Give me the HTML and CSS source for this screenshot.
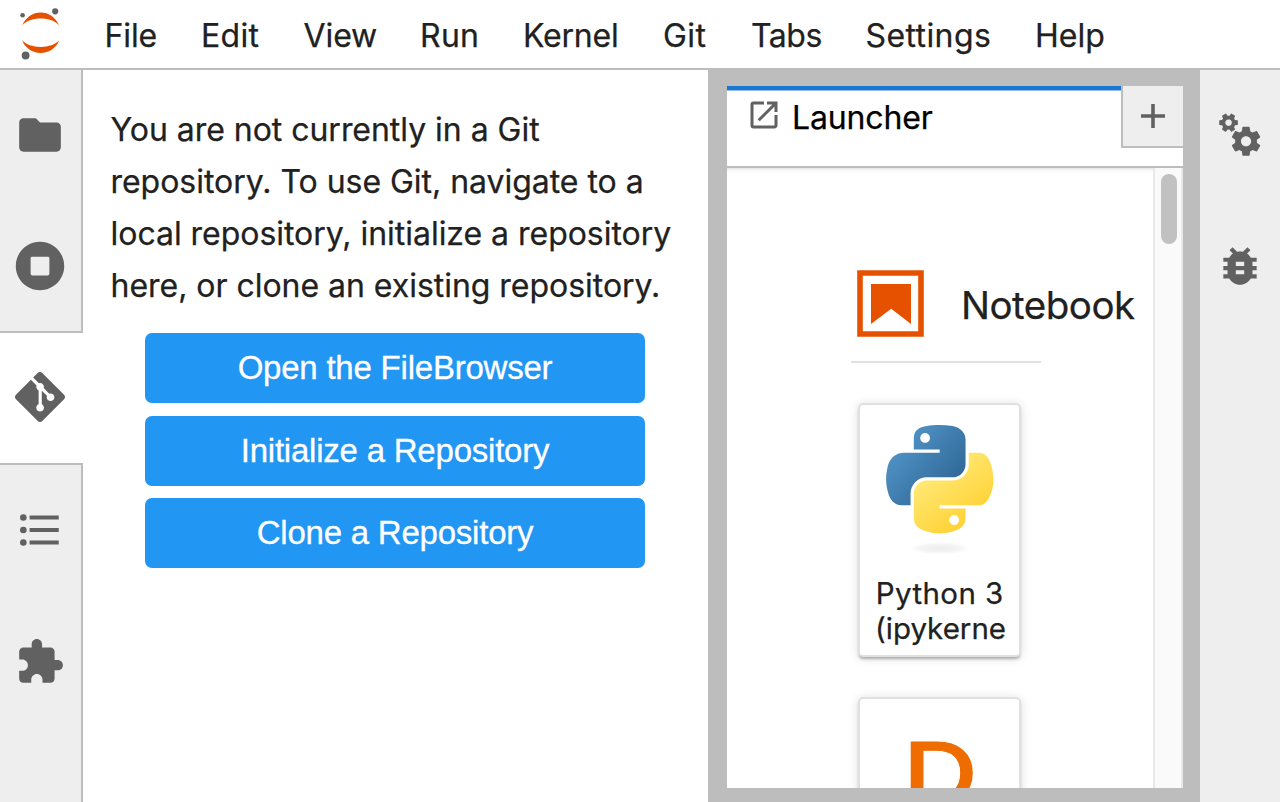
FILE: index.html
```html
<!DOCTYPE html>
<html lang="en">
<head>
<meta charset="utf-8">
<title>JupyterLab</title>
<link rel="stylesheet" href="styles.css">
</head>
<body>
<header class="menubar">
  <svg class="logo" viewBox="0 0 42 52">
    <path fill="#e65100" d="M2 17.300C6 9 12.800 4.400 20.700 4.400S35.500 9 39.200 17.300C35.500 13 28.500 10.500 20.700 10.500S6 13 2 17.300zM2 32.300C6 36.500 12.800 38.900 20.700 38.900s14.800-2.400 18.500-6.600C36.500 40 29 44.900 20.700 44.900S5 40 2 32.300z"/>
    <g fill="#616161"><circle cx="2.600" cy="7.300" r="2.300"/><circle cx="35.200" cy="3.300" r="3.100"/><circle cx="5.600" cy="47.500" r="3.900"/></g>
  </svg>
  <nav class="menu">
    <span class="m-file">File</span><span class="m-edit">Edit</span><span class="m-view">View</span><span class="m-run">Run</span><span class="m-kernel">Kernel</span><span class="m-git">Git</span><span class="m-tabs">Tabs</span><span class="m-settings">Settings</span><span class="m-help">Help</span>
  </nav>
</header>
<div class="body">
  <aside class="rail left">
    <div class="cell first"><svg viewBox="0 0 24 24"><path d="M10 4H4c-1.100 0-1.990.9-1.990 2L2 18c0 1.100.9 2 2 2h16c1.100 0 2-.9 2-2V8c0-1.100-.9-2-2-2h-8l-2-2z"/></svg></div>
    <div class="cell"><svg viewBox="0 0 512 512"><path d="M256 8C119 8 8 119 8 256s111 248 248 248 248-111 248-248S393 8 256 8zm96 328c0 8.800-7.200 16-16 16H176c-8.800 0-16-7.200-16-16V176c0-8.800 7.200-16 16-16h160c8.800 0 16 7.200 16 16v160z"/></svg></div>
    <div class="cell active"><svg viewBox="0 0 24 24"><path d="M23.546 10.930L13.067.452c-.604-.603-1.582-.603-2.188 0L8.708 2.627l2.760 2.760c.645-.215 1.379-.070 1.889.441.516.515.658 1.258.438 1.900l2.658 2.660c.645-.223 1.387-.078 1.900.435.721.720.721 1.884 0 2.604-.719.719-1.881.719-2.600 0-.539-.541-.674-1.337-.404-1.996L12.860 8.955v6.525c.176.086.342.203.488.348.713.721.713 1.883 0 2.600-.719.721-1.889.721-2.609 0-.719-.719-.719-1.879 0-2.598.182-.180.387-.316.605-.406V8.835c-.217-.091-.424-.222-.600-.401-.545-.545-.676-1.342-.396-2.009L7.636 3.700.450 10.881c-.600.605-.600 1.584 0 2.189l10.480 10.477c.604.604 1.582.604 2.186 0l10.430-10.430c.605-.603.605-1.582 0-2.187"/></svg></div>
    <div class="cell"><svg viewBox="0 0 24 24"><path d="M7 5h14v2H7zM7 11h14v2H7zM7 17h14v2H7z"/><circle cx="4" cy="6" r="1.600"/><circle cx="4" cy="12" r="1.600"/><circle cx="4" cy="18" r="1.600"/></svg></div>
    <div class="cell"><svg viewBox="0 0 24 24"><path d="M20.500 11H19V7c0-1.100-.9-2-2-2h-4V3.500C13 2.120 11.880 1 10.500 1S8 2.120 8 3.500V5H4c-1.100 0-1.990.9-1.990 2v3.800H3.500c1.490 0 2.700 1.210 2.700 2.700s-1.210 2.700-2.700 2.700H2V20c0 1.100.9 2 2 2h3.800v-1.500c0-1.490 1.210-2.700 2.700-2.700 1.490 0 2.700 1.210 2.700 2.700V22H17c1.100 0 2-.9 2-2v-4h1.500c1.380 0 2.500-1.120 2.500-2.500S21.880 11 20.500 11z"/></svg></div>
  </aside>
  <section class="git-panel">
    <p class="notice">You are not currently in a Git<br>repository. To use Git, navigate to a<br>local repository, initialize a repository<br>here, or clone an existing repository.</p>
    <div class="actions">
      <button>Open the FileBrowser</button>
      <button>Initialize a Repository</button>
      <button>Clone a Repository</button>
    </div>
  </section>
  <main class="dock">
    <div class="tabbar">
      <div class="tab">
        <svg viewBox="0 0 24 24"><path d="M19 19H5V5h7V3H5a2 2 0 00-2 2v14a2 2 0 002 2h14c1.100 0 2-.9 2-2v-7h-2v7zM14 3v2h3.590l-9.830 9.830 1.410 1.410L19 6.410V10h2V3h-7z"/></svg>
        <span>Launcher</span>
      </div>
      <div class="add"><svg viewBox="0 0 24 24"><path d="M10.200 0h3.600v10.200H24v3.600H13.800V24h-3.600V13.800H0v-3.600h10.200z"/></svg></div>
    </div>
    <div class="launcher">
      <div class="content">
        <div class="section-head">
          <svg viewBox="0 0 67 67"><path d="M3 3h61v61H3z" fill="none" stroke="#e65100" stroke-width="5.600"/><path d="M14 14h40v40L34.200 38.700 14 54z" fill="#e65100"/></svg>
          <span>Notebook</span>
        </div>
        <div class="rule"></div>
        <div class="card">
          <svg class="python" viewBox="12.800 1.980 102.400 124">
            <defs>
              <linearGradient id="blue" x1="0" y1="0" x2="0.850" y2="0.750"><stop offset="0" stop-color="#5a9fd4"/><stop offset="1" stop-color="#306998"/></linearGradient>
              <linearGradient id="gold" x1="0.250" y1="0.250" x2="0.650" y2="0.800"><stop offset="0" stop-color="#ffe873"/><stop offset="1" stop-color="#ffd43b"/></linearGradient>
              <radialGradient id="shade"><stop offset="0" stop-color="#b8b8b8" stop-opacity=".25"/><stop offset=".6" stop-color="#b8b8b8" stop-opacity=".16"/><stop offset="1" stop-color="#b8b8b8" stop-opacity="0"/></radialGradient>
            </defs>
            <path fill="url(#blue)" d="M63.391 1.988c-4.222.020-8.252.379-11.800 1.007-10.450 1.846-12.346 5.710-12.346 12.837v9.411h24.693v3.137H29.977c-7.176 0-13.460 4.313-15.426 12.521-2.268 9.405-2.368 15.275 0 25.096 1.755 7.311 5.947 12.519 13.124 12.519h8.491V67.234c0-8.151 7.051-15.340 15.426-15.340h24.665c6.866 0 12.346-5.654 12.346-12.548V15.833c0-6.693-5.646-11.720-12.346-12.837-4.244-.706-8.645-1.027-12.866-1.008zM50.037 9.557c2.550 0 4.634 2.117 4.634 4.721 0 2.593-2.083 4.690-4.634 4.690-2.560 0-4.633-2.097-4.633-4.690-.001-2.604 2.073-4.721 4.633-4.721z"/>
            <path fill="url(#gold)" d="M91.682 28.380v10.966c0 8.500-7.208 15.655-15.426 15.655H51.591c-6.756 0-12.346 5.783-12.346 12.549v23.515c0 6.691 5.818 10.628 12.346 12.547 7.816 2.297 15.312 2.713 24.665 0 6.216-1.801 12.346-5.423 12.346-12.547v-9.412H63.938v-3.138h37.012c7.176 0 9.852-5.005 12.348-12.519 2.578-7.735 2.467-15.174 0-25.096-1.774-7.145-5.161-12.521-12.348-12.521h-9.268zM77.809 87.927c2.561 0 4.634 2.097 4.634 4.692 0 2.602-2.074 4.719-4.634 4.719-2.550 0-4.633-2.117-4.633-4.719 0-2.595 2.083-4.692 4.633-4.692z"/>
            <ellipse cx="64" cy="119.500" rx="29" ry="6" fill="url(#shade)"/>
          </svg>
          <span class="card-label"><span class="wide">Python 3</span><br>(ipykerne</span>
        </div>
        <div class="card"><span class="letter">D</span></div>
      </div>
      <div class="scrollbar"><div class="thumb"></div></div>
    </div>
  </main>
  <aside class="rail right">
    <div class="cell first"><svg viewBox="0 0 24 24"><defs><path id="gear" d="M14.900 17.450C16.250 17.450 17.350 16.350 17.350 15C17.350 13.650 16.250 12.550 14.900 12.550C13.540 12.550 12.450 13.650 12.450 15C12.450 16.350 13.540 17.450 14.900 17.450ZM20.100 15.680L21.580 16.840C21.710 16.950 21.750 17.130 21.660 17.290L20.260 19.710C20.170 19.860 20 19.920 19.830 19.860L18.090 19.160C17.730 19.440 17.330 19.670 16.910 19.850L16.640 21.700C16.620 21.870 16.470 22 16.300 22H13.500C13.320 22 13.180 21.870 13.150 21.700L12.890 19.850C12.460 19.670 12.070 19.440 11.710 19.160L9.960 19.860C9.810 19.920 9.620 19.860 9.540 19.710L8.140 17.290C8.050 17.130 8.090 16.950 8.220 16.840L9.700 15.680L9.650 15L9.700 14.310L8.220 13.160C8.090 13.050 8.050 12.860 8.140 12.710L9.540 10.290C9.620 10.130 9.810 10.070 9.960 10.130L11.710 10.840C12.070 10.560 12.460 10.320 12.890 10.150L13.150 8.290C13.180 8.130 13.320 8 13.500 8H16.300C16.470 8 16.620 8.130 16.640 8.290L16.910 10.150C17.330 10.320 17.730 10.560 18.090 10.840L19.830 10.130C20 10.070 20.170 10.130 20.260 10.290L21.660 12.710C21.750 12.860 21.710 13.050 21.580 13.160L20.100 14.310L20.150 15L20.100 15.680Z"/></defs><use href="#gear"/><use href="#gear" transform="translate(6.500 6.080) rotate(30) scale(.64) translate(-14.900 -15)"/></svg></div>
    <div class="cell"><svg viewBox="0 0 24 24"><path d="M20 8h-2.810c-.450-.780-1.070-1.450-1.820-1.960L17 4.410 15.590 3l-2.170 2.170C12.960 5.060 12.490 5 12 5c-.490 0-.960.060-1.410.170L8.410 3 7 4.410l1.620 1.630C7.880 6.550 7.260 7.220 6.810 8H4v2h2.090c-.050.330-.090.660-.090 1v1H4v2h2v1c0 .340.040.670.090 1H4v2h2.810c1.040 1.790 2.970 3 5.190 3s4.150-1.210 5.190-3H20v-2h-2.090c.050-.330.090-.660.090-1v-1h2v-2h-2v-1c0-.340-.040-.670-.090-1H20V8zm-6 8h-4v-2h4v2zm0-4h-4v-2h4v2z"/></svg></div>
  </aside>
</div>
</body>
</html>
```
FILE: styles.css
```css
* { box-sizing: border-box; }
body { margin: 0; width: 1280px; height: 802px; overflow: hidden; display: flex; flex-direction: column; background: #fff; color: #212121; font-family: Inter, sans-serif; font-size: 32px; -webkit-text-stroke: .25px currentColor; }
svg { display: block; flex: none; }
.menubar { height: 70px; flex: none; display: flex; border-bottom: 2px solid #bdbdbd; }
.logo { width: 42px; height: 52px; margin: 8px 0 0 20px; }
.menu { display: flex; margin-left: 42.500px; line-height: 72px; white-space: nowrap; }
.menu span { flex: none; }
.m-file { width: 96.500px; letter-spacing: -.1px; }
.m-edit { width: 102.500px; letter-spacing: .3px; }
.m-view { width: 116.500px; letter-spacing: -.1px; }
.m-run { width: 103px; letter-spacing: .3px; }
.m-kernel { width: 140px; letter-spacing: -.2px; }
.m-git { width: 88px; letter-spacing: .4px; }
.m-tabs { width: 114.500px; letter-spacing: -.5px; }
.m-settings { width: 169.500px; letter-spacing: .4px; }
.body { flex: 1; min-height: 0; display: flex; }
.rail { flex: none; background: #eee; display: flex; flex-direction: column; }
.left { width: 83px; }
.right { width: 80px; }
.left::after { content: ""; flex: 1; border-right: 2px solid #bdbdbd; }
.cell { height: 132px; flex: none; display: flex; align-items: center; padding: 0 0 0 15px; }
.left .cell { border-right: 2px solid #bdbdbd; }
.cell.first { height: 130px; padding: 0 0 1px 15px; }
.left .cell.active { height: 134px; margin: -1px 0; padding: 0 0 2px 15px; background: linear-gradient(#bdbdbd, #bdbdbd) top / 100% 2px no-repeat, linear-gradient(#bdbdbd, #bdbdbd) bottom / 100% 2px no-repeat, #fff; border-right: 0; }
.cell svg { width: 50px; height: 50px; fill: #616161; }
.cell:not(.first):not(.active) svg { margin-top: .6px; }
.git-panel { width: 625px; flex: none; padding: 34px 0 0 27.500px; }
.notice { margin: 0; line-height: 52px; white-space: nowrap; letter-spacing: -.03px; }
.actions { width: 500px; margin: 21px 0 0 34.500px; display: flex; flex-direction: column; gap: 12.500px; }
button { height: 70px; border: 0; border-radius: 7px; padding: 0; background: #2196f3; color: #fff; font: 33px "Liberation Sans", Arial, sans-serif; letter-spacing: -.22px; -webkit-text-stroke: .3px #fff; }
.dock { width: 492px; flex: none; background: #bdbdbd; padding: 16px 17px 14px 19px; display: flex; flex-direction: column; }
.tabbar { height: 82px; flex: none; display: flex; background: #fff; border-bottom: 2px solid #bdbdbd; }
.tab { width: 394px; height: 62px; border-top: 4px solid #1976d2; box-shadow: inset 0 1px #90bce8; display: flex; color: #000; padding-left: 19px; }
.tab svg { width: 36px; height: 36px; fill: #616161; margin: 7px 10px 0 0; }
.tab span { line-height: 56px; letter-spacing: -.15px; }
.add { width: 62px; height: 62px; background: #eee; border-left: 2px solid #bdbdbd; border-bottom: 2px solid #bdbdbd; padding: 18px; }
.add svg { width: 24px; height: 24px; fill: #616161; }
.launcher { flex: 1; min-height: 0; display: flex; background: #fff; overflow: hidden; box-shadow: inset 0 4px 4px -3px #ddd; }
.content { width: 426px; flex: none; padding: 101px 0 0 124px; }
.section-head { display: flex; align-items: center; height: 70px; padding-left: 6px; font-size: 38.500px; letter-spacing: -.5px; }
.section-head svg { width: 67px; height: 67px; margin: -2px 37px 0 0; }
.section-head span { padding-top: 2px; }
.rule { width: 190px; height: 2px; background: #e0e0e0; margin: 22px 0 40px; }
.card { width: 163px; height: 254px; margin: 0 0 40px 7px; border: 2px solid #e0e0e0; border-radius: 5px; background: #fff; box-shadow: 0 3px 3px -1px rgba(0,0,0,.28), 0 1px 11px rgba(0,0,0,.13); overflow: hidden; }
.python { width: 107.500px; height: 130px; margin: 20px 0 0 26px; }
.card-label { display: block; margin: 21px 0 0 15px; font-size: 29.500px; line-height: 35px; white-space: nowrap; }
.wide { letter-spacing: .4px; padding-left: .8px; }
.letter { display: block; width: 70px; margin: 28px 0 0 43px; font-size: 85px; line-height: 94px; font-weight: 500; color: #ef6c00; -webkit-text-stroke: 1px #ef6c00; transform: scaleX(1.220); transform-origin: left; }
.scrollbar { width: 30px; background: #fafafa; border: solid #e8e8e8; border-width: 0 2px; padding: 6px 0 0 6px; }
.thumb { width: 16px; height: 70px; border-radius: 8px; background: #c1c1c1; }
```
